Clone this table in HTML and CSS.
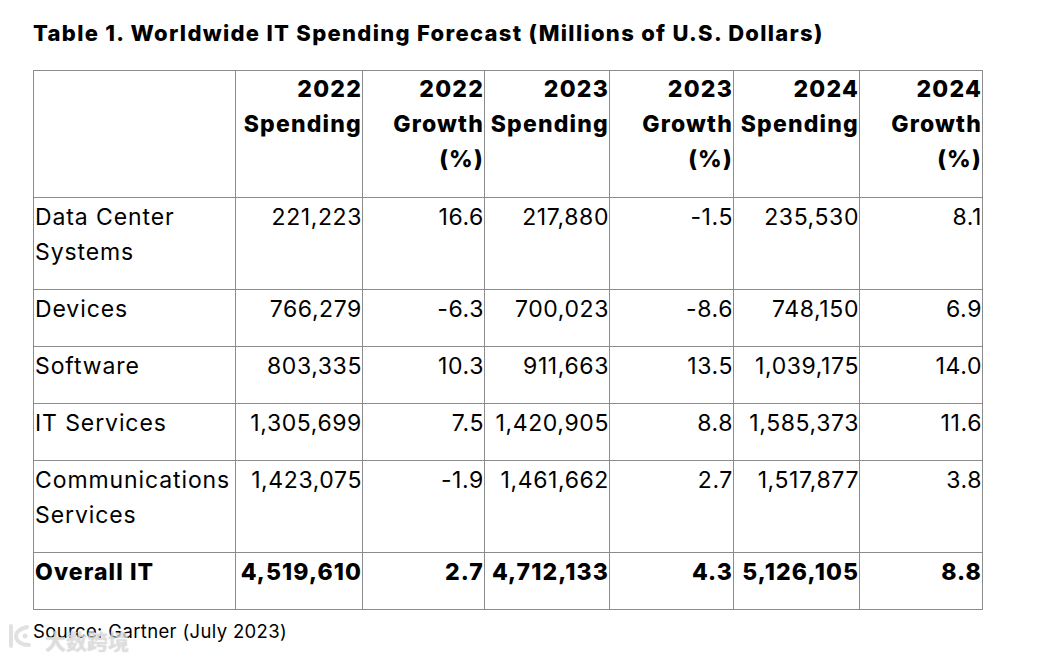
FILE: index.html
```html
<!DOCTYPE html>
<html lang="en">
<head>
<meta charset="utf-8">
<title>Worldwide IT Spending Forecast</title>
<link rel="stylesheet" href="styles.css">
</head>
<body>
<main class="page">
  <h1 class="title">Table 1. Worldwide IT Spending Forecast (Millions of U.S. Dollars)</h1>
  <table class="forecast">
    <colgroup>
      <col class="c-seg"><col class="c-sp1"><col class="c-gr1"><col class="c-sp2"><col class="c-gr2"><col class="c-sp3"><col class="c-gr3">
    </colgroup>
    <thead>
      <tr>
        <th></th>
        <th>2022 Spending</th>
        <th>2022 Growth (%)</th>
        <th>2023 Spending</th>
        <th>2023 Growth (%)</th>
        <th>2024 Spending</th>
        <th>2024 Growth (%)</th>
      </tr>
    </thead>
    <tbody>
      <tr><td>Data Center Systems</td><td>221,223</td><td>16.6</td><td>217,880</td><td>-1.5</td><td>235,530</td><td>8.1</td></tr>
      <tr><td>Devices</td><td>766,279</td><td>-6.3</td><td>700,023</td><td>-8.6</td><td>748,150</td><td>6.9</td></tr>
      <tr><td>Software</td><td>803,335</td><td>10.3</td><td>911,663</td><td>13.5</td><td>1,039,175</td><td>14.0</td></tr>
      <tr><td>IT Services</td><td>1,305,699</td><td>7.5</td><td>1,420,905</td><td>8.8</td><td>1,585,373</td><td>11.6</td></tr>
      <tr><td>Communications Services</td><td>1,423,075</td><td>-1.9</td><td>1,461,662</td><td>2.7</td><td>1,517,877</td><td>3.8</td></tr>
      <tr class="total"><td>Overall IT</td><td>4,519,610</td><td>2.7</td><td>4,712,133</td><td>4.3</td><td>5,126,105</td><td>8.8</td></tr>
    </tbody>
  </table>
  <p class="source">Source: Gartner (July 2023)</p>
</main>
<div class="watermark" aria-hidden="true">
  <svg class="wm-logo" width="26" height="26" viewBox="0 0 26 26"><path d="M4 3 V23" fill="none" stroke="currentColor" stroke-width="4" stroke-linecap="round"/><path d="M20 4 C12 6 9 10 9 13 C9 18 14 22 22 22" fill="none" stroke="currentColor" stroke-width="4" stroke-linecap="round"/><circle cx="18" cy="13" r="2.5" fill="currentColor"/></svg>
  <span class="wm-text">大数跨境</span>
</div>
</body>
</html>
```
FILE: styles.css
```css
html, body { margin: 0; padding: 0; background: #fff; }
body { font-family: "Inter", "Liberation Sans", sans-serif; color: #000; }
.page { padding: 18px 0 0 33px; position: relative; }
.title { margin: 0 0 22px 0; font-size: 22px; line-height: 30px; font-weight: 800; letter-spacing: 1.3px; }
.forecast { border-collapse: collapse; table-layout: fixed; width: 949px; }
.c-seg { width: 202px; } .c-sp1 { width: 127px; } .c-gr1 { width: 122px; } .c-sp2 { width: 125px; }
.c-gr2 { width: 124px; } .c-sp3 { width: 126px; } .c-gr3 { width: 123px; }
.forecast th, .forecast td { border: 1px solid #8c8c8c; padding: 2px 0 19px 0; vertical-align: top; font-size: 23px; line-height: 35px; text-align: right; letter-spacing: 0.6px; }
.forecast th { font-weight: 800; letter-spacing: 1.2px; padding-top: 1px; padding-bottom: 20px; }
.forecast td:first-child { text-align: left; padding-left: 1px; letter-spacing: 0.9px; }
.forecast .total td { font-weight: 800; letter-spacing: 1.1px; }
.source { margin: 8px 0 0 0; font-size: 18.5px; line-height: 26px; letter-spacing: 0.35px; }
.watermark { position: absolute; left: 7px; top: 620px; display: flex; align-items: center; gap: 12px; color: rgba(200,200,200,0.55); }
.wm-text { font-family: "Noto Sans CJK SC", sans-serif; font-weight: 700; font-size: 21px; line-height: 24px; margin-top: 8px; color: rgba(240,240,240,0.6); text-shadow: 0 0 1px rgba(150,150,150,0.6); }
```
